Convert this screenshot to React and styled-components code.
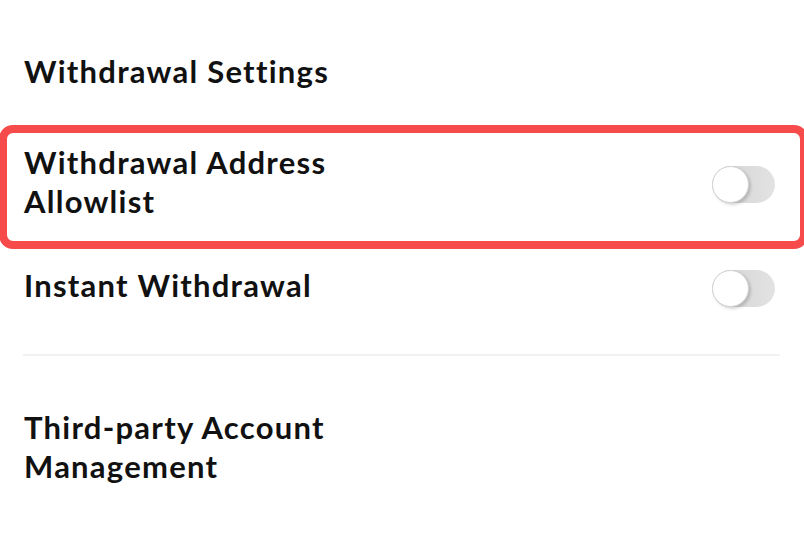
import React from 'react';
import styled, { createGlobalStyle } from 'styled-components';

const GlobalStyle = createGlobalStyle`
  body {
    margin: 0;
    background: #ffffff;
    font-family: Lato, "Noto Sans", sans-serif;
    color: #111111;
    overflow: hidden;
  }
`;

const Page = styled.div`
  width: 804px;
  height: 537px;
  background: #ffffff;
  overflow: hidden;
`;

const Label = styled.div`
  font-size: 31px;
  font-weight: 700;
  line-height: 39px;
  letter-spacing: 1.25px;
  max-width: 360px;
`;

const SectionTitle = styled(Label)`
  height: 125px;
  box-sizing: border-box;
  padding: 52px 24px 0;
  max-width: none;
`;

const Highlight = styled.div`
  margin: 0 -4px 0 -1px;
  height: 124px;
  box-sizing: border-box;
  border: 8px solid #f74b4b;
  border-radius: 14px;
  display: flex;
  align-items: flex-start;
  justify-content: space-between;
  padding: 10px 25px 0 17px;
`;

const Row = styled.div`
  height: 105px;
  box-sizing: border-box;
  display: flex;
  align-items: flex-start;
  justify-content: space-between;
  padding: 17px 29px 0 24px;
`;

const Divider = styled.div`
  height: 2px;
  margin: 0 24px 0 23px;
  background: #f2f2f2;
`;

const Track = styled.div`
  position: relative;
  flex-shrink: 0;
  width: 63px;
  height: 37px;
  margin-top: ${(p) => p.offset}px;
  border-radius: 19px;
  background: linear-gradient(to right, #d8d8d8 40%, #e3e3e3);
`;

const Knob = styled.div`
  position: absolute;
  left: 0;
  top: 0;
  width: 37px;
  height: 37px;
  box-sizing: border-box;
  border-radius: 50%;
  background: #ffffff;
  border: 1px solid #d2d2d2;
  box-shadow: 2px 2px 3px rgba(0, 0, 0, 0.16);
`;

const Toggle = ({ offset }) => (
  <Track offset={offset}>
    <Knob />
  </Track>
);

const Block = styled.div`
  padding: 52px 24px 0;
`;

export default function App() {
  return (
    <Page>
      <GlobalStyle />
      <SectionTitle>Withdrawal Settings</SectionTitle>
      <Highlight>
        <Label>Withdrawal Address Allowlist</Label>
        <Toggle offset={23} />
      </Highlight>
      <Row>
        <Label>Instant Withdrawal</Label>
        <Toggle offset={4} />
      </Row>
      <Divider />
      <Block>
        <Label>Third-party Account Management</Label>
      </Block>
    </Page>
  );
}
